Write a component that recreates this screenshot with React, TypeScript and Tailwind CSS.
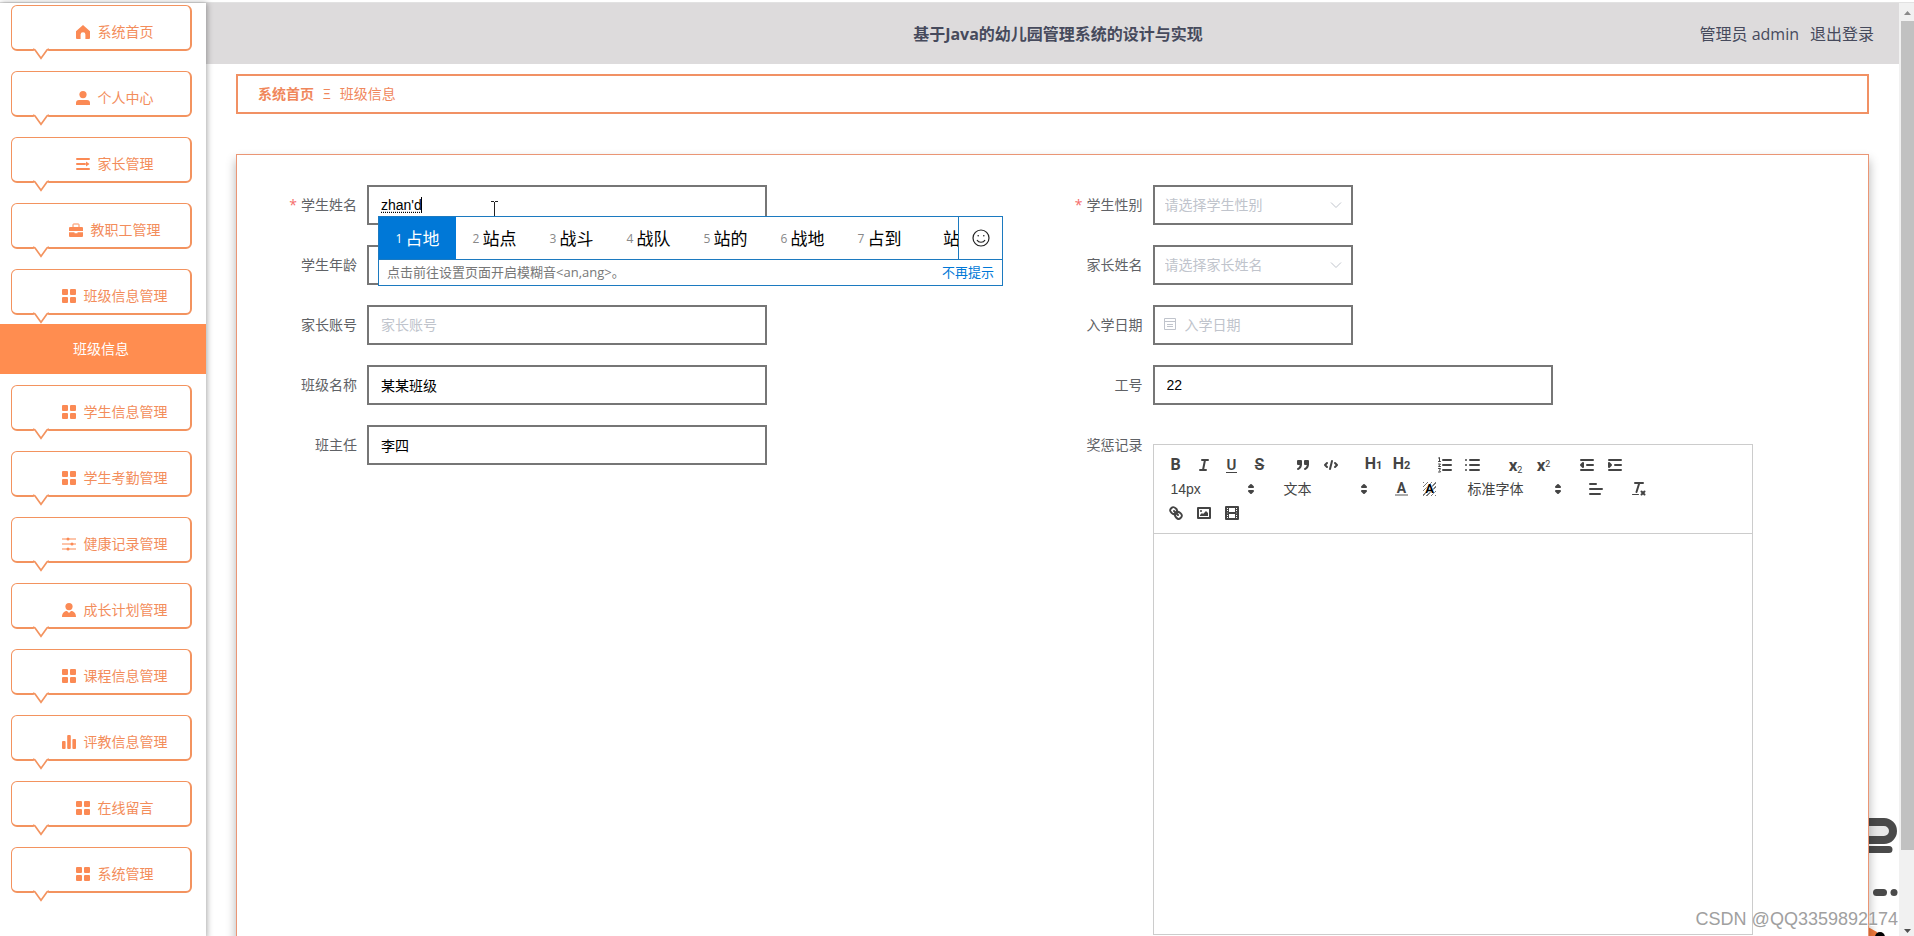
import { useState } from "react";
import type { ReactNode } from "react";

const menuIcons: { [key: string]: ReactNode } = {
  home: <path d="M7 0 0 6.2V13a1 1 0 0 0 1 1h3.6V9.6a2.4 2.4 0 0 1 4.8 0V14H13a1 1 0 0 0 1-1V6.2z" />,
  user: (
    <>
      <circle cx="7" cy="3.6" r="3.6" />
      <path d="M0 14v-2a3 3 0 0 1 3-3h8a3 3 0 0 1 3 3v2z" />
    </>
  ),
  lines: (
    <>
      <rect x="0" y="1" width="14" height="2" rx="1" />
      <rect x="0" y="6" width="10" height="2" rx="1" />
      <path d="M10 4.5 13.5 7 10 9.5z" />
      <rect x="0" y="11" width="14" height="2" rx="1" />
    </>
  ),
  briefcase: (
    <>
      <path d="M4 4V1.6A.6.6 0 0 1 4.600 1h4.800a.6.6 0 0 1 .6.600V4" fill="none" stroke="currentColor" />
      <path d="M1 4h12a1 1 0 0 1 1 1v3H0V5a1 1 0 0 1 1-1zM0 9.200h5.500v1h3v-1H14V13a1 1 0 0 1-1 1H1a1 1 0 0 1-1-1z" />
    </>
  ),
  grid: (
    <>
      <rect x="0" y="0" width="6" height="6" rx="1" />
      <rect x="8" y="0" width="6" height="6" rx="1" />
      <rect x="0" y="8" width="6" height="6" rx="1" />
      <rect x="8" y="8" width="6" height="6" rx="1" />
    </>
  ),
  sliders: (
    <>
      <path d="M0 2h14M0 7h14M0 12h14" stroke="currentColor" strokeWidth="1" />
      <circle cx="6" cy="2" r="1.500" />
      <circle cx="10" cy="7" r="1.500" />
      <circle cx="6" cy="12" r="1.500" />
    </>
  ),
  person: (
    <>
      <circle cx="7" cy="3.600" r="3.600" />
      <path d="M0 14c0-3.500 2-6 5-6l2 2 2-2c3 0 5 2.500 5 6z" />
    </>
  ),
  chart: (
    <>
      <rect x="0" y="6" width="3.600" height="8" rx="1" />
      <rect x="5.200" y="0" width="3.600" height="14" rx="1" />
      <rect x="10.400" y="4" width="3.600" height="10" rx="1" />
    </>
  ),
};

type MenuEntry = { name: string; icon: string; child?: string };

const menu: MenuEntry[] = [
  { name: "系统首页", icon: "home" },
  { name: "个人中心", icon: "user" },
  { name: "家长管理", icon: "lines" },
  { name: "教职工管理", icon: "briefcase" },
  { name: "班级信息管理", icon: "grid", child: "班级信息" },
  { name: "学生信息管理", icon: "grid" },
  { name: "学生考勤管理", icon: "grid" },
  { name: "健康记录管理", icon: "sliders" },
  { name: "成长计划管理", icon: "person" },
  { name: "课程信息管理", icon: "grid" },
  { name: "评教信息管理", icon: "chart" },
  { name: "在线留言", icon: "grid" },
  { name: "系统管理", icon: "grid" },
];

const candidates = ["占地", "站点", "战斗", "战队", "站的", "战地", "占到"];

function MenuItem({ entry }: { entry: MenuEntry }) {
  return (
    <li className={entry.child ? "mb-[11px]" : "mb-5"}>
      <a
        href="#"
        className="relative ml-[11px] mr-[14px] flex h-[46px] items-center justify-center gap-2 rounded-md border border-r-2 border-b-2 border-[#f3935f] pt-2 pl-[27px] text-sm text-[#f38d5b]"
      >
        <svg viewBox="0 0 14 14" className="size-[14px] shrink-0 text-[#fb8a55]" fill="currentColor">
          {menuIcons[entry.icon]}
        </svg>
        {entry.name}
        <svg viewBox="0 0 16 12" className="absolute -bottom-[11px] left-[21px] h-3 w-4" fill="none">
          <path d="M0 1.500V0H16V1.500L8 10.500z" fill="#fff" />
          <path d="M0 1 2 2 8 10.300 14 2 16 1" stroke="#f3935f" strokeWidth="1.600" />
        </svg>
      </a>
      {entry.child && (
        <a href="#" className="mt-[9px] flex h-[50px] items-center justify-center bg-[#ff8d50] pr-1 text-sm text-white">
          {entry.child}
        </a>
      )}
    </li>
  );
}

function Field({ id, label, required, children }: { id: string; label: string; required?: boolean; children: ReactNode }) {
  return (
    <div className="mb-5 flex items-start">
      <label htmlFor={id} className="w-[100px] shrink-0 pr-[10px] text-right text-sm leading-10 text-[#606266]">
        {required && <span className="mr-1 text-[#f56c6c]">*</span>}
        {label}
      </label>
      {children}
    </div>
  );
}

const box =
  "h-10 border-2 border-[#767676] bg-white px-3 font-['Liberation_Sans','Noto_Sans_CJK_SC',sans-serif] text-sm text-black outline-none placeholder:text-[#c0c4cc]";

function SelectBox({ id, placeholder }: { id: string; placeholder: string }) {
  return (
    <div className="relative">
      <select id={id} className="h-10 w-[200px] appearance-none border-2 border-[#767676] bg-white px-[10px] text-sm text-[#c0c4cc] outline-none">
        <option>{placeholder}</option>
      </select>
      <svg viewBox="0 0 12 12" className="pointer-events-none absolute top-[14px] right-[11px] size-3" fill="none" stroke="#c0c4cc">
        <path d="M1 3.500 6 8.500 11 3.500" />
      </svg>
    </div>
  );
}

function Tool({ name, children }: { name: string; children: ReactNode }) {
  return (
    <button type="button" aria-label={name} className="flex h-6 w-7 items-center justify-center text-[#444]">
      {children}
    </button>
  );
}

function Icon({ children }: { children: ReactNode }) {
  return (
    <svg viewBox="0 0 18 18" className="size-[18px]" fill="none" stroke="currentColor" strokeWidth="2" strokeLinecap="round" strokeLinejoin="round">
      {children}
    </svg>
  );
}

function Picker({ label, wide }: { label: string; wide?: boolean }) {
  return (
    <button type="button" className={`flex h-6 items-center justify-between pl-[9px] text-sm text-[#444] ${wide ? "w-[108px]" : "w-[98px]"}`}>
      {label}
      <svg viewBox="0 0 18 18" className="size-[18px]" fill="#444" stroke="#444" strokeWidth="2" strokeLinejoin="round">
        <path d="M7 11 9 13 11 11zM7 7 9 5 11 7z" />
      </svg>
    </button>
  );
}

function Editor() {
  return (
    <div className="mt-[19px] w-[600px] border border-[#ccc] font-['Liberation_Sans','Noto_Sans_CJK_SC',sans-serif]">
      <div className="border-b border-[#ccc] p-2">
        <div className="flex gap-[15px] font-[Roboto,sans-serif]">
          <div className="flex">
            <Tool name="bold"><span className="text-base leading-4 font-bold">B</span></Tool>
            <Tool name="italic">
              <Icon><path d="M7 4h6M5 14h6M8 14 10 4" /></Icon>
            </Tool>
            <Tool name="underline"><span className="border-b border-[#444] px-px text-[15px] leading-[14px] font-semibold">U</span></Tool>
            <Tool name="strike"><span className="text-base leading-4 font-semibold line-through decoration-1">S</span></Tool>
          </div>
          <div className="flex">
            <Tool name="blockquote">
              <Icon>
                <g fill="currentColor">
                  <rect x="4" y="5" width="3" height="3" />
                  <rect x="11" y="5" width="3" height="3" />
                  <path d="M7 8c0 4-3 5-3 5M14 8c0 4-3 5-3 5" />
                </g>
              </Icon>
            </Tool>
            <Tool name="code">
              <Icon><path d="M5 7 3 9 5 11M13 7 15 9 13 11M10 5 8 13" /></Icon>
            </Tool>
          </div>
          <div className="flex">
            <Tool name="header 1"><span className="text-base leading-4 font-bold">H<span className="text-[11px]">1</span></span></Tool>
            <Tool name="header 2"><span className="text-base leading-4 font-bold">H<span className="text-[11px]">2</span></span></Tool>
          </div>
          <div className="flex">
            <Tool name="ordered list">
              <Icon>
                <path d="M7 4h8M7 9h8M7 14h8" />
                <path d="M2.500 2 3.500 1.500V5M2.500 5.500h2M2.500 8h2L2.500 10.500h2M2.500 12.500h2L3.500 14.300 4.500 16h-2" strokeWidth="1" />
              </Icon>
            </Tool>
            <Tool name="bullet list">
              <Icon><path d="M6 4h9M6 9h9M6 14h9M2 4h0M2 9h0M2 14h0" /></Icon>
            </Tool>
          </div>
          <div className="flex">
            <Tool name="subscript"><span className="text-[17px] leading-4 font-bold">x<sub className="text-[9px] font-normal">2</sub></span></Tool>
            <Tool name="superscript"><span className="text-[17px] leading-4 font-bold">x<sup className="text-[9px] font-normal">2</sup></span></Tool>
          </div>
          <div className="flex">
            <Tool name="outdent">
              <Icon><path d="M3 14h12M3 4h12M9 9h6" /><path d="M5 7v4L3 9z" fill="currentColor" /></Icon>
            </Tool>
            <Tool name="indent">
              <Icon><path d="M3 14h12M3 4h12M9 9h6" /><path d="M3 7v4L5 9z" fill="currentColor" /></Icon>
            </Tool>
          </div>
        </div>
        <div className="flex gap-[15px]">
          <Picker label="14px" />
          <Picker label="文本" />
          <div className="flex font-[Roboto,sans-serif]">
            <Tool name="color"><span className="border-b-2 border-[#aaa] px-[2px] text-sm leading-3 font-bold">A</span></Tool>
            <Tool name="background">
              <span className="bg-[repeating-linear-gradient(135deg,#777_0_1px,#fff_1px_3px)] px-[2px] text-[13px] leading-[14px] font-bold text-black [text-shadow:0_0_1px_#fff,0_0_2px_#fff,0_0_2px_#fff]">A</span>
            </Tool>
          </div>
          <Picker label="标准字体" wide />
          <Tool name="align">
            <Icon><path d="M3 4h6M3 9h12M3 14h10" /></Icon>
          </Tool>
          <Tool name="clean">
            <Icon>
              <path d="M5 3h8M6.500 12 9.300 3M11.500 11.500 14.500 14.500M14.500 11.500 11.500 14.500" />
              <path d="M2.500 14.500h6" strokeWidth="1" />
            </Icon>
          </Tool>
        </div>
        <div className="flex">
          <Tool name="link">
            <Icon>
              <path d="M7 7 11 11" />
              <path d="M8.900 4.577a3.476 3.476 0 0 1 .36 4.679A3.476 3.476 0 0 1 4.577 8.900C3.185 7.500 2.035 6.400 4.217 4.217S7.500 3.185 8.900 4.577z" />
              <path d="M13.423 9.100a3.476 3.476 0 0 0-4.679-.36 3.476 3.476 0 0 0 .36 4.679c1.392 1.392 2.500 2.542 4.679.36S14.815 10.500 13.423 9.100z" />
            </Icon>
          </Tool>
          <Tool name="image">
            <Icon>
              <rect x="3" y="4" width="12" height="10" />
              <circle cx="6" cy="7" r="1" fill="currentColor" stroke="none" />
              <path d="M5 12v-1l2-2 1 1 3-3 2 2v3z" fill="currentColor" stroke="none" />
            </Icon>
          </Tool>
          <Tool name="video">
            <Icon>
              <rect x="3" y="3" width="12" height="12" />
              <path d="M5.500 3v12M12.500 3v12M3 5.500h3M3 7.500h3M3 10.500h3M3 12.500h3M12 5.500h3M12 7.500h3M12 10.500h3M12 12.500h3" strokeWidth="1" strokeLinecap="butt" />
              <path d="M5 9h8" />
            </Icon>
          </Tool>
        </div>
      </div>
      <div contentEditable suppressContentEditableWarning className="h-[400px] outline-none" />
    </div>
  );
}

function Ime() {
  return (
    <div className="absolute top-[31px] left-[11px] z-10 w-[625px] border border-[#1c7ac0] bg-white font-['Open_Sans','Noto_Sans_CJK_SC',sans-serif]">
      <div className="flex h-[42px]">
        <div className="flex min-w-0 flex-1 overflow-hidden">
          {candidates.map((word, i) => (
            <button
              type="button"
              key={word}
              className={`flex w-[77px] shrink-0 items-center justify-center gap-[3px] pt-[2px] text-[17px] ${i === 0 ? "bg-[#0078d7] text-white" : "text-black"}`}
            >
              <span className={`text-xs ${i === 0 ? "text-white" : "text-[#888]"}`}>{i + 1}</span>
              {word}
            </button>
          ))}
          <button type="button" className="shrink-0 pt-[2px] pl-[25px] text-[17px] text-black">站</button>
        </div>
        <button type="button" aria-label="emoji" className="flex w-11 items-center justify-center border-l border-[#1c7ac0]">
          <svg viewBox="0 0 18 18" className="size-[18px]" fill="none" stroke="#222" strokeWidth="1.200">
            <circle cx="9" cy="9" r="8" />
            <path d="M5 11c1.500 3 6.500 3 8 0" />
            <circle cx="6.200" cy="6.800" r="0.800" fill="#222" stroke="none" />
            <circle cx="11.800" cy="6.800" r="0.800" fill="#222" stroke="none" />
          </svg>
        </button>
      </div>
      <div className="flex h-[26px] items-center justify-between border-t border-[#1c7ac0] px-2 text-[13px] text-[#777]">
        <span>点击前往设置页面开启模糊音&lt;an,ang&gt;。</span>
        <a href="#" className="text-[#0078d7]">不再提示</a>
      </div>
    </div>
  );
}

export default function App() {
  const [name, setName] = useState("zhan'd");

  return (
    <div className="relative h-screen overflow-hidden bg-white font-['Open_Sans','Noto_Sans_CJK_SC',sans-serif]">
      <div className="h-[3px] border-b border-[#e2e2e2]" />
      <div className="flex h-full">
        <nav className="z-10 w-[206px] shrink-0 bg-white pt-[2px] shadow-[1px_0_6px_rgba(0,0,0,0.35)]">
          <ul>
            {menu.map((entry) => (
              <MenuItem key={entry.name} entry={entry} />
            ))}
          </ul>
        </nav>

        <div className="relative min-w-0 flex-1">
          <header className="flex h-[61px] items-center bg-[#dddbdc] pr-[25px] pl-9 text-base text-[#464a5c]">
            <div className="flex-1" />
            <h1 className="font-bold">基于Java的幼儿园管理系统的设计与实现</h1>
            <div className="flex flex-1 justify-end gap-[11px]">
              <span>管理员 admin</span>
              <a href="#">退出登录</a>
            </div>
          </header>

          {/* mascot peeking out from behind the card */}
          <svg viewBox="0 0 40 130" className="absolute right-0 top-[807px] h-[130px] w-10" fill="#4a4a4a">
            <path d="M0 12h25a9 9 0 0 1 0 18H0" fill="#e8e8e8" stroke="#4a4a4a" strokeWidth="8" />
            <path d="M0 36h30a3.500 3.500 0 0 1 0 7H0z" />
            <rect x="14" y="79" width="14" height="7" rx="3.500" />
            <circle cx="35" cy="82.500" r="3.500" />
            <path d="M0 112 18 122 22 130H0z" fill="#f07a3c" />
            <circle cx="21" cy="127" r="5" fill="#000" />
          </svg>

          <main className="px-[30px] pt-[10px]">
            <nav className="flex h-10 items-center border-2 border-[#f19164] px-5 text-sm text-[#f0875c]">
              <a href="#" className="font-bold">系统首页</a>
              <span className="mx-[9px]">Ξ</span>
              <span>班级信息</span>
            </nav>

            <form className="relative mt-10 grid h-[900px] grid-cols-2 items-start border border-[#ea9675] bg-white p-[30px] shadow-[0_6px_10px_rgba(0,0,0,0.3)]">
              <div>
                <Field id="name" label="学生姓名" required>
                  <div className="relative">
                    <input id="name" className={`${box} w-[400px] underline decoration-dotted underline-offset-2`} value={name} onChange={(e) => setName(e.target.value)} />
                    <span className="absolute top-3 left-[54px] h-4 w-px bg-black" />
                    <svg viewBox="0 0 7 17" className="absolute top-4 left-[124px] h-[17px] w-[7px]" fill="none" stroke="#222">
                      <path d="M0 .5h3M4 .5h3M3.500 1v15" />
                    </svg>
                    <Ime />
                  </div>
                </Field>
                <Field id="age" label="学生年龄">
                  <input id="age" className={`${box} w-[400px]`} />
                </Field>
                <Field id="account" label="家长账号">
                  <input id="account" className={`${box} w-[400px]`} placeholder="家长账号" />
                </Field>
                <Field id="class" label="班级名称">
                  <input id="class" className={`${box} w-[400px]`} defaultValue="某某班级" />
                </Field>
                <Field id="teacher" label="班主任">
                  <input id="teacher" className={`${box} w-[400px]`} defaultValue="李四" />
                </Field>
              </div>
              <div>
                <Field id="gender" label="学生性别" required>
                  <SelectBox id="gender" placeholder="请选择学生性别" />
                </Field>
                <Field id="parent" label="家长姓名">
                  <SelectBox id="parent" placeholder="请选择家长姓名" />
                </Field>
                <Field id="date" label="入学日期">
                  <div className="relative">
                    <input id="date" className={`${box} w-[200px] pl-[30px]`} placeholder="入学日期" />
                    <svg viewBox="0 0 14 14" className="absolute top-3 left-[10px] size-[14px]" fill="none" stroke="#c0c4cc">
                      <path d="M1.500 1.500h11v11h-11zM1.500 4.500h11M4 7.500h6M4 9.500h6" />
                    </svg>
                  </div>
                </Field>
                <Field id="jobNo" label="工号">
                  <input id="jobNo" className={`${box} w-[400px]`} defaultValue="22" />
                </Field>
                <Field id="record" label="奖惩记录">
                  <Editor />
                </Field>
              </div>
            </form>
          </main>
        </div>

        {/* page scrollbar */}
        <div className="flex w-[15px] shrink-0 flex-col bg-[#f1f1f1] pl-[2px]">
          <svg viewBox="0 0 13 18" className="h-[18px] w-[13px]" fill="#8a8a8a">
            <path d="M6.500 8 10 12H3z" />
          </svg>
          <div className="h-[829px] bg-[#c1c1c1]" />
          <svg viewBox="0 0 13 18" className="mt-auto mb-[1px] h-[18px] w-[13px]" fill="#505050">
            <path d="M3 9h7L6.500 13z" />
          </svg>
        </div>
      </div>
      <p className="absolute right-4 bottom-[5px] z-20 font-['Liberation_Sans',sans-serif] text-lg leading-6 text-[#a0a0a0] [text-shadow:1px_1px_0_#fff]">
        CSDN @QQ3359892174
      </p>
    </div>
  );
}
